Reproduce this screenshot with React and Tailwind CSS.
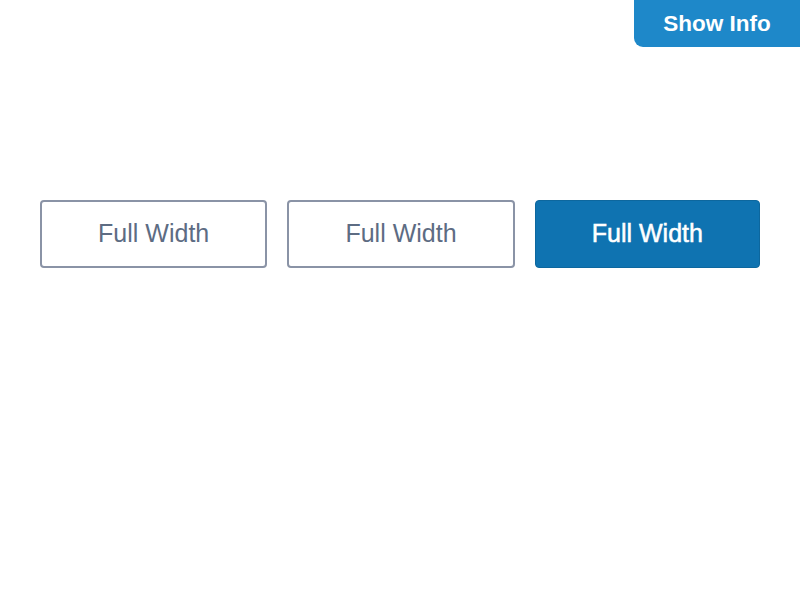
export default function App() {
  return (
    <div className="relative w-[800px] h-[600px] bg-white" style={{ fontFamily: '"Liberation Sans", Arial, sans-serif' }}>
      <button className="absolute top-0 right-0 w-[166px] h-[47px] bg-[#1e88c9] text-white text-[22.5px] font-bold rounded-bl-[9px] flex items-center justify-center">
        Show Info
      </button>
      <div className="flex gap-[20px] px-[40px] pt-[200px]">
        <button className="flex-1 h-[68px] border-2 border-[#8a93a6] rounded-[4px] bg-white text-[#5d6c83] text-[25px] flex items-center justify-center">
          Full Width
        </button>
        <button className="flex-1 h-[68px] border-2 border-[#8a93a6] rounded-[4px] bg-white text-[#5d6c83] text-[25px] flex items-center justify-center">
          Full Width
        </button>
        <button className="flex-1 h-[68px] border border-[#0d679e] rounded-[4px] bg-[#0f73b1] text-white text-[25px] [-webkit-text-stroke:0.5px_white] flex items-center justify-center">
          Full Width
        </button>
      </div>
    </div>
  );
}
